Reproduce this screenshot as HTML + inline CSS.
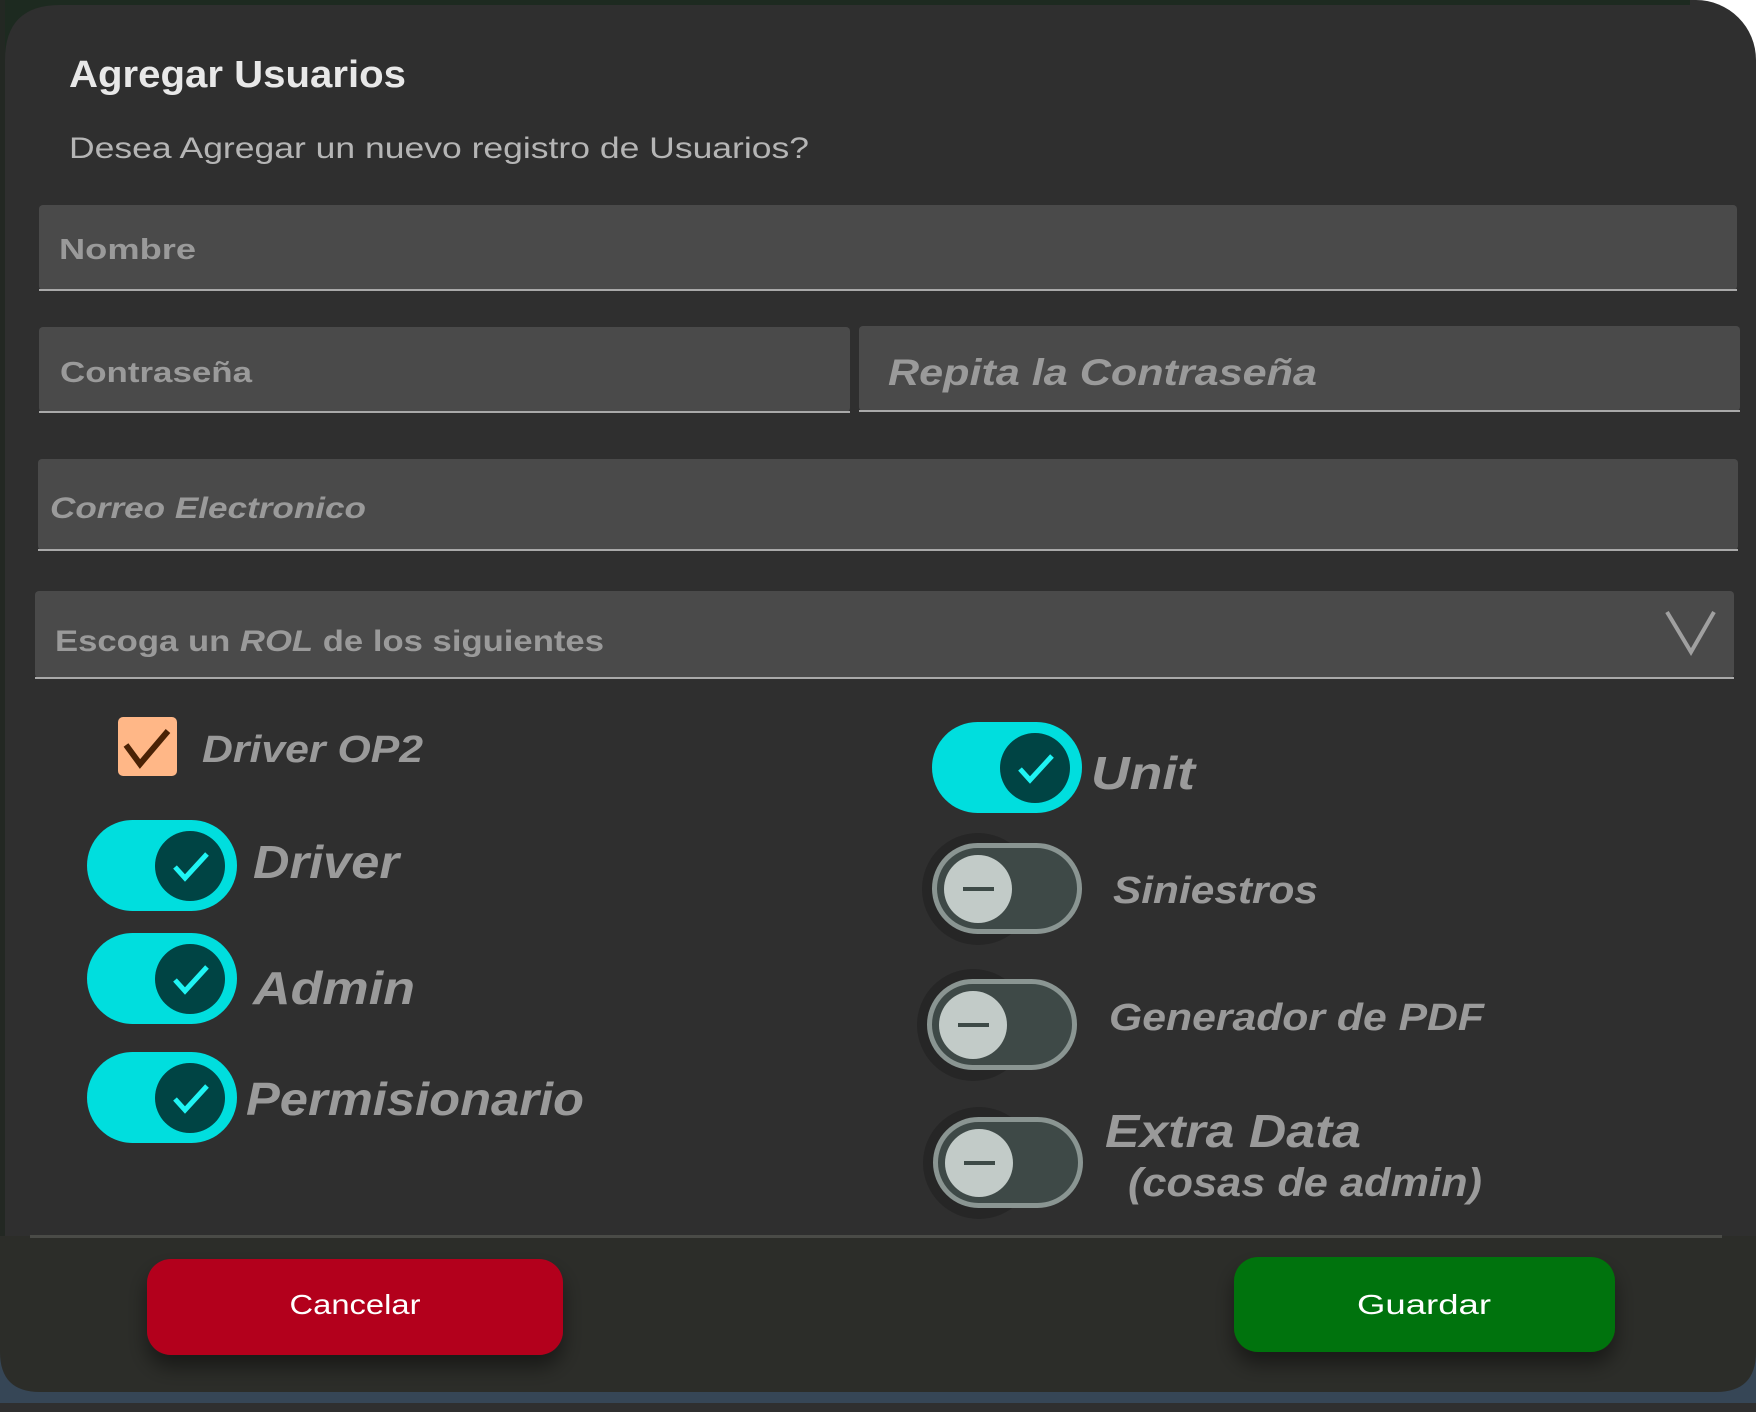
<!DOCTYPE html>
<html><head><meta charset="utf-8"><style>
html,body{margin:0;padding:0;background:#2f2f2f;width:1756px;height:1412px;overflow:hidden}
svg{display:block}
text{font-family:"Liberation Sans",sans-serif}
</style></head><body>
<svg width="1756" height="1412" viewBox="0 0 1756 1412" xmlns="http://www.w3.org/2000/svg">
<defs>
<filter id="sh" x="-20%" y="-30%" width="140%" height="180%"><feDropShadow dx="0" dy="12" stdDeviation="10" flood-color="#000" flood-opacity="0.45"/></filter>
</defs>
<rect width="1756" height="1412" fill="#fff"/>
<rect x="0" y="1360" width="1756" height="52" fill="#2f2f2f"/>
<rect x="0" y="1330" width="1756" height="73" fill="#364656"/>
<rect x="0" y="0" width="1756" height="1392" rx="60" fill="#2f2f2f"/>
<rect x="0" y="0" width="1690" height="300" fill="#2f2f2f"/>
<rect x="0" y="0" width="1690" height="5" fill="#1d2a20"/>
<rect x="0" y="0" width="60" height="60" fill="#1d2a20"/>
<rect x="0" y="0" width="5" height="1240" fill="#232823"/>
<path d="M5 60 Q5 5 60 5 H120 V120 H5 Z" fill="#2f2f2f"/>
<!-- footer -->
<path d="M0 1236 H1756 V1352 Q1756 1392 1716 1392 H40 Q0 1392 0 1352 Z" fill="#2c2d29"/>
<rect x="30" y="1235" width="1692" height="3" fill="#4a4b47"/>

<text x="69" y="87" font-size="38" font-weight="bold" fill="#e8e8e8" textLength="337" lengthAdjust="spacingAndGlyphs">Agregar Usuarios</text>
<text x="69" y="158" font-size="30" fill="#b5b5b5" textLength="740" lengthAdjust="spacingAndGlyphs">Desea Agregar un nuevo registro de Usuarios?</text>

<rect x="39" y="205" width="1698" height="85" rx="4" fill="#4a4a4a"/>
<rect x="39" y="289" width="1698" height="2" fill="#a9a9a9"/>
<text x="59" y="259" font-size="29" font-weight="bold" fill="#9a9a9a" textLength="137" lengthAdjust="spacingAndGlyphs">Nombre</text>

<rect x="39" y="327" width="811" height="85" rx="4" fill="#4a4a4a"/>
<rect x="39" y="411" width="811" height="2" fill="#a9a9a9"/>
<text x="60" y="382" font-size="29" font-weight="bold" fill="#9a9a9a" textLength="192" lengthAdjust="spacingAndGlyphs">Contraseña</text>

<rect x="859" y="326" width="881" height="85" rx="4" fill="#4a4a4a"/>
<rect x="859" y="410" width="881" height="2" fill="#a9a9a9"/>
<text x="888" y="385" font-size="37" font-weight="bold" font-style="italic" fill="#9a9a9a" textLength="429" lengthAdjust="spacingAndGlyphs">Repita la Contraseña</text>

<rect x="38" y="459" width="1700" height="91" rx="4" fill="#4a4a4a"/>
<rect x="38" y="549" width="1700" height="2" fill="#a9a9a9"/>
<text x="50" y="518" font-size="30" font-weight="bold" font-style="italic" fill="#9a9a9a" textLength="316" lengthAdjust="spacingAndGlyphs">Correo Electronico</text>

<rect x="35" y="591" width="1699" height="87" rx="4" fill="#4a4a4a"/>
<rect x="35" y="677" width="1699" height="2" fill="#a9a9a9"/>
<text x="55" y="651" font-size="30" font-weight="bold" fill="#9a9a9a" textLength="549" lengthAdjust="spacingAndGlyphs">Escoga un <tspan font-style="italic">ROL</tspan> de los siguientes</text>
<path d="M1667 612 L1691 652 L1714 612" fill="none" stroke="#a0a0a0" stroke-width="4"/>

<rect x="118" y="717" width="59" height="59" rx="5" fill="#ffb787"/>
<path d="M126 745 L140 764 L168 731" fill="none" stroke="#4a2205" stroke-width="6"/>
<text x="202" y="762" font-size="38" font-weight="bold" font-style="italic" fill="#9a9a9a" textLength="221" lengthAdjust="spacingAndGlyphs">Driver OP2</text>

<g id="on">
<rect x="87" y="820" width="150" height="91" rx="45.5" fill="#00dede"/>
<circle cx="190" cy="866" r="35" fill="#004444"/>
<path d="M175 867 L185 878 L207 854" fill="none" stroke="#1ff4f4" stroke-width="5"/>
</g>
<text x="253" y="878" font-size="46" font-weight="bold" font-style="italic" fill="#9a9a9a" textLength="146" lengthAdjust="spacingAndGlyphs">Driver</text>
<use href="#on" transform="translate(0,113)"/>
<text x="253" y="1004" font-size="46" font-weight="bold" font-style="italic" fill="#9a9a9a" textLength="162" lengthAdjust="spacingAndGlyphs">Admin</text>
<use href="#on" transform="translate(0,232)"/>
<text x="246" y="1115" font-size="46" font-weight="bold" font-style="italic" fill="#9a9a9a" textLength="338" lengthAdjust="spacingAndGlyphs">Permisionario</text>
<use href="#on" transform="translate(845,-98)"/>
<text x="1091" y="789" font-size="46" font-weight="bold" font-style="italic" fill="#9a9a9a" textLength="104" lengthAdjust="spacingAndGlyphs">Unit</text>

<g id="off">
<circle cx="978" cy="889" r="56" fill="#262626"/>
<rect x="934.5" y="845.5" width="145" height="86" rx="43" fill="#3e4947" stroke="#8a9592" stroke-width="5"/>
<circle cx="978" cy="889" r="34" fill="#c2cbc8"/>
<rect x="963" y="887" width="31" height="4" fill="#3d4a47"/>
</g>
<text x="1113" y="903" font-size="38" font-weight="bold" font-style="italic" fill="#9a9a9a" textLength="205" lengthAdjust="spacingAndGlyphs">Siniestros</text>
<use href="#off" transform="translate(-5,136)"/>
<text x="1109" y="1030" font-size="38" font-weight="bold" font-style="italic" fill="#9a9a9a" textLength="375" lengthAdjust="spacingAndGlyphs">Generador de PDF</text>
<use href="#off" transform="translate(1,274)"/>
<text x="1105" y="1147" font-size="46" font-weight="bold" font-style="italic" fill="#9a9a9a" textLength="256" lengthAdjust="spacingAndGlyphs">Extra Data</text>
<text x="1128" y="1196" font-size="40" font-weight="bold" font-style="italic" fill="#9a9a9a" textLength="354" lengthAdjust="spacingAndGlyphs">(cosas de admin)</text>

<rect x="147" y="1259" width="416" height="96" rx="24" fill="#b3001e" filter="url(#sh)"/>
<text x="355" y="1314" font-size="28" fill="#fff" text-anchor="middle" textLength="131" lengthAdjust="spacingAndGlyphs">Cancelar</text>
<rect x="1234" y="1257" width="381" height="95" rx="24" fill="#037307" filter="url(#sh)"/>
<text x="1424" y="1314" font-size="28" fill="#fff" text-anchor="middle" textLength="134" lengthAdjust="spacingAndGlyphs">Guardar</text>
</svg>
</body></html>
